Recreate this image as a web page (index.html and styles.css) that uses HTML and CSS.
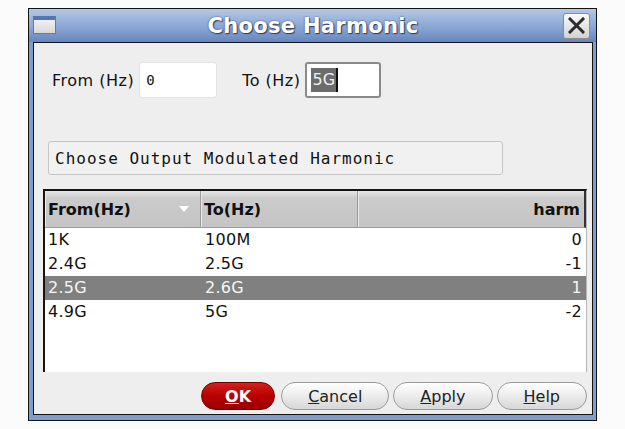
FILE: index.html
```html
<!DOCTYPE html>
<html lang="en">
<head>
    <meta charset="UTF-8">
    <title>Choose Harmonic</title>
    <link rel="stylesheet" href="styles.css">
</head>
<body>
    <div class="window">
        <div class="titlebar">
            <span class="win-icon"></span>
            <span class="title">Choose Harmonic</span>
            <span class="close-btn">
                <svg width="17" height="17" viewBox="0 0 17 17">
                    <path d="M2 2 L15 15 M15 2 L2 15" stroke="#2b2b2b" stroke-width="3" stroke-linecap="square"/>
                </svg>
            </span>
        </div>

        <div class="content">
            <!-- Faixa de frequência -->
            <div class="range-row">
                <span class="field-label">From (Hz)</span>
                <div class="field mono">0</div>
                <span class="field-label to-label">To (Hz)</span>
                <div class="field focused"><span class="sel">5G</span><span class="caret"></span></div>
            </div>

            <div class="prompt">Choose Output Modulated Harmonic</div>

            <div class="table">
                <div class="thead">
                    <div class="th sort">From(Hz)<span class="arrow"></span></div>
                    <div class="th">To(Hz)</div>
                    <div class="th num">harm</div>
                </div>
                <div class="row">
                    <div class="td">1K</div>
                    <div class="td">100M</div>
                    <div class="td num">0</div>
                </div>
                <div class="row">
                    <div class="td">2.4G</div>
                    <div class="td">2.5G</div>
                    <div class="td num">-1</div>
                </div>
                <div class="row selected">
                    <div class="td">2.5G</div>
                    <div class="td">2.6G</div>
                    <div class="td num">1</div>
                </div>
                <div class="row">
                    <div class="td">4.9G</div>
                    <div class="td">5G</div>
                    <div class="td num">-2</div>
                </div>
            </div>

            <div class="buttons">
                <button class="btn ok"><u>O</u>K</button>
                <button class="btn"><u>C</u>ancel</button>
                <button class="btn"><u>A</u>pply</button>
                <button class="btn"><u>H</u>elp</button>
            </div>
        </div>
    </div>
</body>
</html>
```

FILE: styles.css
```css
* {
    box-sizing: border-box;
    margin: 0;
    padding: 0;
}

body {
    background: #fbfbfb;
    font-family: 'DejaVu Sans', sans-serif;
    font-size: 16px;
    color: #111;
    padding: 8px 0 0 28px;
}

.window {
    width: 569px;
    height: 413px;
    border: 1px solid #141414;
    background: #7f9dcb;
    padding: 0 3px 5px 4px;
    display: flex;
    flex-direction: column;
}

.titlebar {
    height: 33px;
    display: grid;
    grid-template-columns: 27px 1fr 27px;
    align-items: center;
    background: linear-gradient(#b4c7e6, #8aa6d4 55%, #6686bd);
    margin: 0 -3px 0 -4px;
    padding: 0 3px 0 4px;
}

.win-icon {
    width: 23px;
    height: 18px;
    border: 1px solid #6d7a8e;
    border-top: 4px solid #5577b0;
    background: linear-gradient(#f0f0f0, #d8d8d8);
    margin-top: -1px;
}

.title {
    text-align: center;
    font-weight: bold;
    font-size: 21px;
    letter-spacing: 0.3px;
    color: #fff;
    text-shadow: 1px 1px 1px #2c3e60, 0 0 2px #3c5080;
}

.close-btn {
    width: 27px;
    height: 26px;
    border: 1px solid #8c8c8c;
    border-radius: 3px;
    background: linear-gradient(#fafafa, #d2d2d2);
    display: flex;
    justify-content: center;
    align-items: center;
    margin-left: -3px;
}

.content {
    flex: 1;
    background: #eeeeee;
    border: 1px solid #141414;
    display: flex;
    flex-direction: column;
    padding: 19px 5px 4px 9px;
}

.range-row {
    display: flex;
    align-items: center;
    padding-left: 9px;
}

.field-label {
    letter-spacing: 0.5px;
    margin-right: 5px;
}

.to-label {
    margin-left: 25px;
}

.field {
    width: 78px;
    height: 36px;
    background: #fff;
    border: 1px solid #e2e2e2;
    border-radius: 3px;
    display: flex;
    align-items: center;
    padding-left: 6px;
}

.field.mono {
    font-family: 'DejaVu Sans Mono', monospace;
    font-size: 14px;
}

.field.focused {
    width: 76px;
    border: 2px solid #8a8a8a;
    padding-left: 4px;
}

.sel {
    background: #6c6c6c;
    color: #f0f0f0;
    line-height: 24px;
    padding: 0 1px;
}

.caret {
    width: 2px;
    height: 24px;
    background: #111;
}

.prompt {
    margin: 43px 0 0 5px;
    width: 455px;
    height: 34px;
    border: 1px solid #c6c6c6;
    border-radius: 3px;
    background: #f1f1f1;
    font-family: 'DejaVu Sans Mono', monospace;
    font-size: 16px;
    letter-spacing: 1px;
    display: flex;
    align-items: center;
    padding-left: 6px;
}

.table {
    margin-top: 14px;
    height: 183px;
    background: #fff;
    border-top: 2px solid #141414;
    border-left: 2px solid #141414;
    border-right: 1px solid #b8b8b8;
}

.thead {
    display: grid;
    grid-template-columns: 156px 157px 1fr;
    height: 37px;
    background: linear-gradient(#e6e6e6, #cbcbcb 20%, #c4c4c4);
    border-bottom: 1px solid #9c9c9c;
    border-right: 2px solid #333;
}

.th {
    font-weight: bold;
    display: flex;
    align-items: center;
    padding: 0 4px 0 3px;
    border-right: 1px solid #9a9a9a;
    box-shadow: inset 1px 0 #eaeaea;
}

.th:last-child {
    border-right: none;
}

.sort {
    justify-content: space-between;
    padding-right: 11px;
}

.arrow {
    width: 0;
    height: 0;
    border-left: 5px solid transparent;
    border-right: 5px solid transparent;
    border-top: 6px solid #fff;
}

.num {
    justify-content: flex-end;
    text-align: right;
}

.row {
    display: grid;
    grid-template-columns: 156px 157px 1fr;
    height: 24px;
    line-height: 24px;
    letter-spacing: 0.3px;
}

.td {
    padding: 0 4px 0 3px;
}

.td:nth-child(2) {
    padding-left: 4px;
}

.row.selected {
    background: #808080;
    color: #f6f6f6;
}

.buttons {
    margin-top: auto;
    display: flex;
    justify-content: flex-end;
    gap: 4px;
    padding-right: 0;
}

.btn {
    height: 28px;
    padding: 0 26px;
    font-family: 'DejaVu Sans', sans-serif;
    font-size: 16px;
    color: #222;
    background: linear-gradient(#ffffff, #ececec 50%, #d6d6d6);
    border: 1px solid #9a9a9a;
    border-radius: 14px;
    box-shadow: inset 0 1px #fff;
}

.btn.ok {
    padding: 0 23px;
    margin-right: 2px;
    font-weight: bold;
    color: #fff;
    background: linear-gradient(#d42020, #b80000 50%, #980000);
    border-color: #7a0000;
    box-shadow: none;
}
```
